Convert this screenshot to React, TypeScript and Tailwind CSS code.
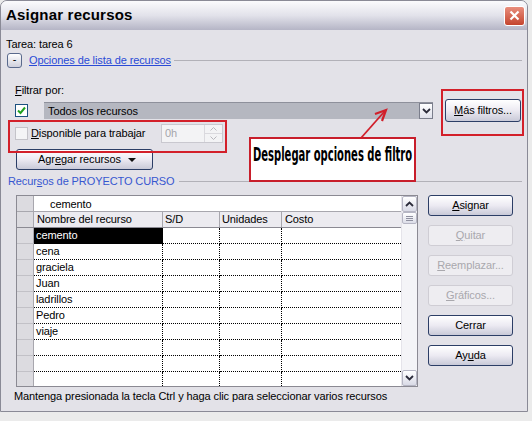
import React from "react";

const rows = ["cemento", "cena", "graciela", "Juan", "ladrillos", "Pedro", "viaje", "", "", ""];

function XpButton({
  children,
  disabled,
  className = "",
}: {
  children: React.ReactNode;
  disabled?: boolean;
  className?: string;
}) {
  return (
    <div
      className={`flex items-center justify-center rounded-[3px] border text-[11px] ${
        disabled
          ? "border-[#cfcdd4] bg-[#eeedf1] text-[#a9a8ad]"
          : "border-[#2c3e66] bg-linear-to-b from-white via-[#eceaf2] to-[#c9cad8] text-black"
      } ${className}`}
    >
      {children}
    </div>
  );
}

function Chevron({ up = false }: { up?: boolean }) {
  return (
    <svg width="9" height="6" viewBox="0 0 9 6">
      <path
        d={up ? "M1 5 L4.5 1.5 L8 5" : "M1 1 L4.5 4.5 L8 1"}
        fill="none"
        stroke="#2b2b3a"
        strokeWidth="1.8"
      />
    </svg>
  );
}

export default function App() {
  return (
    <div className="relative h-[421px] w-[532px] overflow-hidden bg-[#ebebeb] font-['Liberation_Sans',Arial,sans-serif] text-[11px] tracking-[-0.1px] text-black">
      {/* window */}
      <div className="flex h-[412px] w-[528px] flex-col overflow-hidden rounded-t-[7px] border border-[#8a8a96] bg-[#e3e2e8]">
        {/* title bar */}
        <div className="flex h-[29px] shrink-0 items-center justify-between bg-linear-to-b from-[#fbfbfd] via-[#e2e2ea] to-[#b5b5c6] pl-[5px] pr-[2px]">
          <span className="text-[15px] font-bold tracking-[0.2px] text-black">Asignar recursos</span>
          <div className="flex h-[20px] w-[21px] items-center justify-center rounded-[3px] border border-white bg-linear-to-b from-[#e88d7c] to-[#c4432d]">
            <svg width="11" height="11" viewBox="0 0 11 11">
              <path d="M1.5 1.5 L9.5 9.5 M9.5 1.5 L1.5 9.5" stroke="white" strokeWidth="2.2" />
            </svg>
          </div>
        </div>

        {/* body */}
        <div className="flex flex-col">
          <div className="mt-[7px] h-[14px] pl-[5px] leading-[14px]">Tarea: tarea 6</div>

          <div className="mt-[2px] flex h-[15px] items-center pl-[6px] pr-[5px]">
            <div className="flex h-[15px] w-[15px] items-center justify-center rounded-[3px] border border-[#5a6a8c] bg-linear-to-b from-white to-[#cfd0dc] text-[11px] leading-none">
              <span className="-mt-[3px]">-</span>
            </div>
            <span className="ml-[7px] text-[#2a4bd6] underline">Opciones de lista de recursos</span>
            <div className="ml-[3px] h-px flex-1 bg-[#b2b1b8]" />
          </div>

          <div className="mt-[16px] h-[12px] pl-[14px] leading-[12px]">
            <span className="underline">F</span>iltrar por:
          </div>

          <div className="mt-[3px] flex h-[23px] items-center">
            <div className="ml-[14px] flex h-[13px] w-[13px] items-center justify-center border border-[#1c5180] bg-white">
              <svg width="9" height="9" viewBox="0 0 9 9">
                <path d="M1 4.5 L3.5 7 L8 1.5" fill="none" stroke="#21a121" strokeWidth="2" />
              </svg>
            </div>
            <div className="ml-[16px] flex h-[17px] w-[389px] items-center border-t border-[#8e909b] bg-[#b5b7c0] pl-[4px]">
              <span className="flex-1">Todos los recursos</span>
              <div className="flex h-[16px] w-[14px] items-center justify-center border border-[#7b7e8c] bg-linear-to-b from-white to-[#dfe0ea]">
                <Chevron />
              </div>
            </div>
            <XpButton className="ml-[12px] h-[23px] w-[76px]">
              <span>
                <span className="underline">M</span>ás filtros...
              </span>
            </XpButton>
          </div>

          <div className="mt-[2px] flex h-[19px] items-center">
            <div className="ml-[14px] h-[13px] w-[13px] border border-[#c4c3c9] bg-[#f4f4f6]" />
            <span className="ml-[3px] w-[130px]">
              <span className="underline">D</span>isponible para trabajar
            </span>
            <div className="flex h-[19px] w-[62px] items-center border border-[#c9c8cf] bg-[#f3f3f5] pl-[3px] text-[#a5a5ab]">
              <span className="flex-1">0h</span>
              <div className="flex h-[17px] w-[18px] flex-col border-l border-[#dad9de]">
                <div className="flex flex-1 items-center justify-center border-b border-[#dad9de]">
                  <svg width="7" height="4" viewBox="0 0 7 4">
                    <path d="M0.5 3.5 L3.5 0.5 L6.5 3.5" fill="none" stroke="#b8b7bd" />
                  </svg>
                </div>
                <div className="flex flex-1 items-center justify-center">
                  <svg width="7" height="4" viewBox="0 0 7 4">
                    <path d="M0.5 0.5 L3.5 3.5 L6.5 0.5" fill="none" stroke="#b8b7bd" />
                  </svg>
                </div>
              </div>
            </div>
          </div>

          <XpButton className="ml-[15px] mt-[6px] h-[21px] w-[137px]">
            <span className="ml-[14px] flex-1 text-center">
              Agr<span className="underline">e</span>gar recursos
            </span>
            <svg width="8" height="4" viewBox="0 0 8 4" className="mr-[16px]">
              <path d="M0 0 L8 0 L4 4 Z" fill="#111" />
            </svg>
          </XpButton>

          <div className="mt-[5px] flex h-[13px] items-center pl-[7px] pr-[5px]">
            <span className="text-[#3757d0]">
              Recur<span className="underline">s</span>os de PROYECTO CURSO
            </span>
            <div className="ml-[4px] h-px flex-1 bg-[#b2b1b8]" />
          </div>

          <div className="mt-[7px] flex">
            {/* grid */}
            <div className="ml-[15px] flex h-[192px] w-[402px] overflow-hidden border border-[#8b8a93] bg-white">
              <div className="flex w-[385px] flex-col">
                <div className="flex h-[16px] shrink-0 border-b border-[#a8a7ae]">
                  <div className="w-[17px] border-r border-[#a8a7ae] bg-[#dcdbe0]" />
                  <div className="flex-1 pl-[16px] leading-[16px]">cemento</div>
                </div>
                <div className="flex h-[16px] shrink-0 border-b border-[#8b8a93] bg-[#ecebf0]">
                  <div className="w-[17px] border-r border-[#a8a7ae] bg-[#dcdbe0]" />
                  <div className="w-[129px] border-r border-[#a8a7ae] pl-[3px] leading-[15px]">Nombre del recurso</div>
                  <div className="w-[57px] border-r border-[#a8a7ae] pl-[2px] leading-[15px]">S/D</div>
                  <div className="w-[62px] border-r border-[#a8a7ae] pl-[2px] leading-[15px]">Unidades</div>
                  <div className="flex-1 pl-[3px] leading-[15px]">Costo</div>
                </div>
                {rows.map((r, i) => (
                  <div key={i} className="flex h-[16px] shrink-0">
                    <div className="w-[17px] border-r border-b border-r-[#a8a7ae] border-b-[#c2c1c7] bg-[#dcdbe0]" />
                    <div
                      className={`w-[129px] border-r border-b border-dotted border-black pl-[2px] leading-[15px] ${
                        i === 0 ? "bg-black text-white" : ""
                      }`}
                    >
                      {r}
                    </div>
                    <div className="w-[57px] border-r border-b border-dotted border-black" />
                    <div className="w-[62px] border-r border-b border-dotted border-black" />
                    <div className="flex-1 border-b border-dotted border-black" />
                  </div>
                ))}
              </div>
              {/* scrollbar */}
              <div className="flex w-[16px] flex-col border-l border-[#e5e4ea] bg-[#f4f4f7]">
                <div className="flex h-[16px] items-center justify-center rounded-[2px] border border-[#b6b6c4] bg-linear-to-b from-white to-[#d9dae6]">
                  <Chevron up />
                </div>
                <div className="flex h-[12px] items-center justify-center rounded-[2px] border border-[#b6b6c4] bg-linear-to-b from-white to-[#dcdde8]">
                  <svg width="7" height="5" viewBox="0 0 7 5">
                    <path d="M0 0.5 H7 M0 2.5 H7 M0 4.5 H7" stroke="#8f90a0" />
                  </svg>
                </div>
                <div className="flex-1" />
                <div className="flex h-[16px] items-center justify-center rounded-[2px] border border-[#b6b6c4] bg-linear-to-b from-white to-[#d9dae6]">
                  <Chevron />
                </div>
              </div>
            </div>

            {/* right buttons */}
            <div className="ml-[10px] flex flex-col gap-[9px]">
              <XpButton className="h-[21px] w-[85px] border-[#1b2f5e]">
                <span>
                  <span className="underline">A</span>signar
                </span>
              </XpButton>
              <XpButton disabled className="h-[21px] w-[85px]">
                <span>
                  <span className="underline">Q</span>uitar
                </span>
              </XpButton>
              <XpButton disabled className="h-[21px] w-[85px]">
                <span>
                  <span className="underline">R</span>eemplazar...
                </span>
              </XpButton>
              <XpButton disabled className="h-[21px] w-[85px]">
                <span>
                  <span className="underline">G</span>ráficos...
                </span>
              </XpButton>
              <XpButton className="h-[21px] w-[85px]">Cerrar</XpButton>
              <XpButton className="h-[21px] w-[85px]">
                <span>
                  Ay<span className="underline">u</span>da
                </span>
              </XpButton>
            </div>
          </div>

          <div className="mt-[3px] h-[13px] pl-[13px] leading-[13px]">
            Mantenga presionada la tecla Ctrl y haga clic para seleccionar varios recursos
          </div>
        </div>
      </div>

      {/* annotations */}
      <div className="absolute left-[441px] top-[89px] h-[47px] w-[83px] border-2 border-[#d3202a]" />
      <div className="absolute left-[8px] top-[120px] h-[33px] w-[219px] border-2 border-[#d3202a]" />
      <div className="absolute left-[249px] top-[137px] flex h-[45px] w-[167px] items-start overflow-hidden border-2 border-[#c81e2b] bg-white pl-[2px] pt-[5px]">
        <span className="origin-left scale-x-[0.585] whitespace-nowrap font-['DejaVu_Sans_Condensed','DejaVu_Sans',sans-serif] text-[19px] font-bold leading-[20px] tracking-[0px] text-black">
          Desplegar opciones de filtro
        </span>
      </div>
      <svg className="absolute left-[355px] top-[105px]" width="36" height="36" viewBox="0 0 36 36">
        <path d="M6 33 L29 7" stroke="#d11f2a" strokeWidth="1.8" fill="none" />
        <path d="M20 9 L31 5 L27 16" stroke="#d11f2a" strokeWidth="2.2" fill="none" />
      </svg>
    </div>
  );
}
